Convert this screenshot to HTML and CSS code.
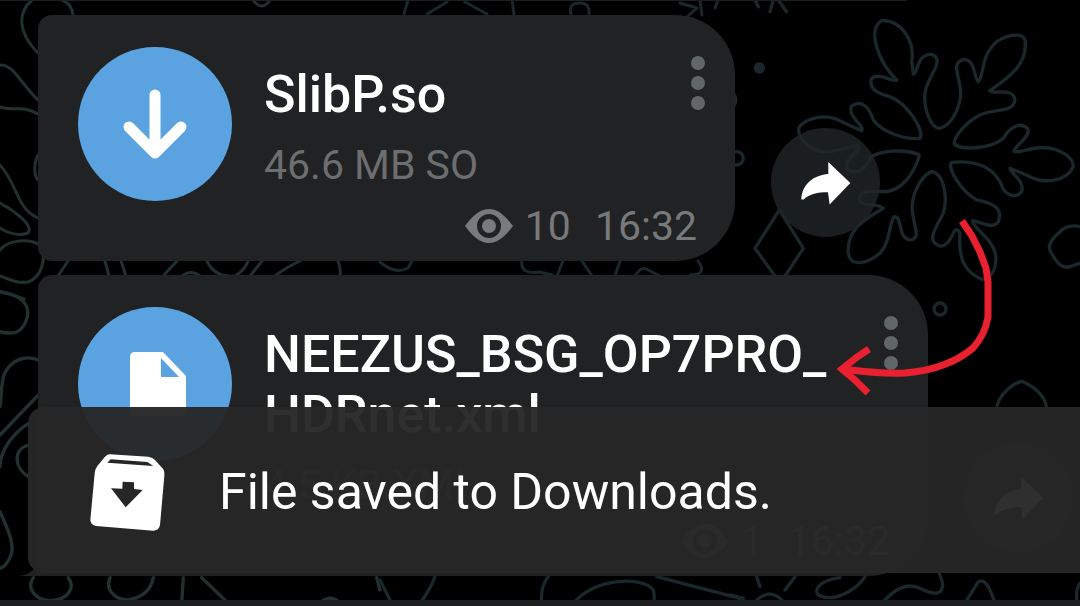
FILE: index.html
```html
<!DOCTYPE html>
<html lang="en">

<head>
    <meta charset="UTF-8">
    <meta name="viewport" content="width=device-width, initial-scale=1.0">
    <title>Chat files</title>
    <link rel="stylesheet" href="styles.css">
</head>

<body>
    <!-- wallpaper -->
    <svg class="wallpaper" width="1080" height="606" viewBox="0 0 1080 606" aria-hidden="true">
        <g class="doodle left">
            <path d="M32 0C18 12 17 32 38 53M62 0Q72 4 73 15M0 65C14 65 18 80 38 100M0 107C12 112 20 104 38 114M0 165C18 185 16 208 38 218M38 155C33 165 34 175 38 180M0 203C10 208 35 225 28 233C20 236 8 234 0 228M0 250C8 240 28 238 40 245C48 260 40 278 28 282C15 284 8 278 0 276M0 292Q12 294 24 299M253 0Q262 12 270 0" />
            <path d="M68 261L58 276M105 261L109 276M121 261L126 276M177 261L163 276M182 276Q191 269 200 276M207 261Q215 278 235 276Q245 270 248 261M262 261L250 276M300 261Q285 268 275 276M338 261Q341 268 340 276" />
        </g>
        <g class="doodle">
            <path d="M380 262Q395 275 408 268L412 261M522 261Q520 275 540 272L552 275M563 261L557 276M582 261L592 276M615 276L620 261M635 276Q642 265 648 270L660 276M698 261Q708 275 690 275M408 0L404 14M427 14L447 2M465 2L487 14M512 0L514 14M571 14Q568 3 580 3Q590 3 589 14M680 3L697 8L688 16M700 1L702 15M718 0L715 8" />
        </g>
        <g class="doodle fine" transform="translate(730 0) scale(.3333)">
            <path d="M500 240C445 185 410 90 455 62C520 60 555 130 545 185L550 222C565 220 560 160 605 163C650 180 590 230 585 280C580 330 605 385 628 385C665 380 700 310 690 260C685 220 665 190 700 178C740 180 730 235 745 245C765 220 750 170 800 125C840 100 880 100 885 120C895 190 840 230 780 272C790 285 850 260 855 300C850 340 790 325 750 345C710 365 670 410 673 432C690 450 780 450 820 415C840 380 870 365 893 385C905 410 850 440 852 455C880 460 920 430 980 450C1020 465 1030 485 1030 500C1010 545 940 555 890 525L840 505C840 520 885 540 875 575C855 600 820 580 815 555C790 500 740 480 665 487C650 500 690 570 740 600C790 610 820 625 805 665C790 690 750 665 728 662C730 690 800 720 798 780C795 820 780 835 755 838C700 815 685 770 690 700C670 660 670 740 630 738C585 725 620 680 640 640C655 590 640 520 605 515C570 530 540 590 548 640C555 690 570 710 545 720C500 720 520 650 493 650C475 670 485 720 450 760C400 800 360 795 355 760C350 690 400 660 460 625C440 605 400 625 388 600C395 560 430 580 480 573C530 560 560 500 568 465C540 450 450 445 420 475C405 510 380 525 355 510C330 480 400 450 385 437C340 440 290 470 245 445C215 425 200 400 208 380C235 350 290 340 335 365L395 392C405 375 350 350 365 318C400 295 420 330 430 360C460 400 530 420 570 415C585 390 530 310 480 290C440 280 415 265 425 235C450 215 490 250 500 240Z" />
            <path d="M135 828L75 745L148 630L220 745L165 828M1050 680Q1010 670 985 700Q945 735 965 760Q990 810 1020 800L1050 790M75 0L85 20M130 0L120 35M145 0L170 35M10 280Q25 300 10 320" />
            <circle cx="20" cy="475" r="20" />
            <circle cx="88" cy="204" r="12" class="dot" />
        </g>
        <g class="doodle fine left" transform="translate(0 280) scale(.3333)">
            <path d="M0 35C60 45 90 70 82 110C70 160 40 165 0 155M115 240C80 225 30 235 10 290C0 340 5 360 0 380M115 345L0 465M85 430C40 460 0 510 0 560M85 495C40 510 40 560 85 590M0 695C30 760 40 790 35 820Q20 860 0 865" />
            <path d="M100 893C80 920 100 960 150 962C210 960 225 920 205 893M330 893C315 930 345 960 385 960C440 950 455 920 460 893M550 893L545 970M605 893L685 970M965 965Q990 945 1015 965M1130 893L1140 930" />
        </g>
        <g class="doodle fine" transform="translate(380 280) scale(.3333)">
            <path d="M0 900L35 970M120 970Q150 930 165 890M485 970Q480 920 505 890M580 970C650 890 790 890 820 930Q825 950 820 970M830 890L1080 955" />
        </g>
        <g class="doodle fine" transform="translate(730 280) scale(.3333)">
            <path d="M800 390C800 345 860 300 880 305C930 330 950 360 950 390M80 890L90 920M165 930L195 890M0 945L40 955M75 965Q120 920 160 965M330 893C270 900 250 930 265 945C310 970 380 930 405 890M460 965Q520 900 570 925Q640 960 638 910L625 870M705 970L745 905Q770 890 795 970M1050 910Q1035 930 1042 970" />
            <circle cx="630" cy="87" r="18" />
        </g>
    </svg>

    <main class="chat">
        <div class="message-edge previous"></div>

        <article class="message">
            <div class="card">
                <div class="file">
                    <button class="round-btn" aria-label="Download SlibP.so">
                        <svg width="64" height="70" viewBox="0 0 64 70">
                            <path d="M32 6V62M6 38L32 64L58 38" fill="none" stroke="#fff" stroke-width="11" stroke-linecap="round" stroke-linejoin="round" />
                        </svg>
                    </button>
                    <div class="info">
                        <h2 class="name">SlibP.so</h2>
                        <p class="size">46.6 MB SO</p>
                    </div>
                    <button class="menu" aria-label="More options"><i></i><i></i><i></i></button>
                </div>
                <div class="meta">
                    <svg class="eye" width="48" height="34" viewBox="0 0 48 34">
                        <path fill-rule="evenodd" d="M0 17C9 5 16 0 24 0S39 5 48 17C39 29 32 34 24 34S9 29 0 17ZM24 5a12 12 0 1 0 0 24a12 12 0 1 0 0-24ZM24 10a7 7 0 1 1 0 14a7 7 0 1 1 0-14Z" />
                    </svg>
                    <span class="views">10</span>
                    <time>16:32</time>
                </div>
            </div>
            <button class="share" aria-label="Forward">
                <svg width="50" height="44" viewBox="210 476 152 132">
                    <path d="M211 592C213 545 250 518 293 515V478L360 542L297 607L292 570C260 570 237 575 218 592Z" />
                </svg>
            </button>
        </article>

        <article class="message">
            <div class="card tail">
                <div class="file">
                    <button class="round-btn" aria-label="Open NEEZUS_BSG_OP7PRO_HDRnet.xml">
                        <svg width="62" height="64" viewBox="-6 0 62 64">
                            <path fill="#fff" fill-rule="evenodd" d="M5 0H33L56 24V59Q56 64 51 64H5Q0 64 0 59V5Q0 0 5 0ZM31 6V25H49Z" />
                        </svg>
                    </button>
                    <div class="info">
                        <h2 class="name">NEEZUS_BSG_OP7PRO_<wbr>HDRnet.xml</h2>
                        <p class="size">4.5 KB XML</p>
                    </div>
                    <button class="menu" aria-label="More options"><i></i><i></i><i></i></button>
                </div>
                <div class="meta">
                    <svg class="eye" width="48" height="34" viewBox="0 0 48 34">
                        <path fill-rule="evenodd" d="M0 17C9 5 16 0 24 0S39 5 48 17C39 29 32 34 24 34S9 29 0 17ZM24 5a12 12 0 1 0 0 24a12 12 0 1 0 0-24ZM24 10a7 7 0 1 1 0 14a7 7 0 1 1 0-14Z" />
                    </svg>
                    <span class="views">1</span>
                    <time>16:32</time>
                </div>
            </div>
            <button class="share" aria-label="Forward">
                <svg width="50" height="44" viewBox="210 476 152 132">
                    <path d="M211 592C213 545 250 518 293 515V478L360 542L297 607L292 570C260 570 237 575 218 592Z" />
                </svg>
            </button>
        </article>

        <div class="message-edge next"></div>
    </main>

    <!-- hand drawn arrow -->
    <svg class="pointer" width="160" height="180" viewBox="835 217 160 180" aria-hidden="true">
        <path d="M962 221L972 236L980 252L986 268L988 282V317Q985 335 973 348Q960 359 943 365Q928 371 905 373Q880 374 842 369" />
        <path d="M869 349L857 357L842 369L855 380L868 393" />
    </svg>

    <div class="toast" role="status">
        <svg width="75" height="80" viewBox="90 36 225 240">
            <path fill="#fff" fill-rule="evenodd" d="M150 43L265 50Q278 52 285 60L310 88Q314 96 313 108L300 255Q297 272 280 272L108 258Q92 255 91 240L104 100Q104 88 112 78L135 50Q142 43 150 43ZM152 58L142 68L280 78L262 66ZM188 125L187 146L153 145L197 202L248 150L222 147V127Z" />
        </svg>
        <p>File saved to Downloads.</p>
    </div>
</body>

</html>
```
FILE: styles.css
```css
* {
    box-sizing: border-box;
    margin: 0;
    padding: 0;
}

body {
    position: relative;
    min-height: 100vh;
    overflow: hidden;
    background: #000;
    color: #fff;
    font-family: Roboto, "Liberation Sans", sans-serif;
}

button {
    border: 0;
    background: none;
    font: inherit;
    cursor: pointer;
}

/* wallpaper */
.wallpaper {
    position: absolute;
    top: 0;
    left: 0;
}

.doodle {
    fill: none;
    stroke: #1a272b;
    stroke-width: 3;
    stroke-linecap: round;
    stroke-linejoin: round;
}

.doodle.left {
    stroke: #22302f;
}

.doodle.fine {
    stroke-width: 10;
}

.dot {
    fill: #1a272b;
}

/* messages */
.chat {
    position: relative;
    display: flex;
    flex-direction: column;
    gap: 14px;
    min-height: 100vh;
}

.message-edge {
    background: #1d1e1f;
}

.previous {
    width: 84%;
    height: 1px;
}

.next {
    flex: 1;
    margin-top: 10px;
}

.message {
    display: flex;
    align-items: flex-end;
    gap: 36px;
    padding-left: 38px;
}

.card {
    position: relative;
    padding: 32px 38px 10px 40px;
    border-radius: 14px 60px 60px 14px;
    background: #202223;
}

.tail {
    border-bottom-left-radius: 0;
}

.tail::before {
    content: '';
    position: absolute;
    right: 100%;
    bottom: 0;
    width: 18px;
    height: 18px;
    background: radial-gradient(circle at 0 0, transparent 17px, #202223 18px);
}

.file {
    display: flex;
    align-items: flex-start;
}

.round-btn {
    display: flex;
    flex: none;
    align-items: center;
    justify-content: center;
    width: 154px;
    height: 154px;
    border-radius: 50%;
    background: #5ba3e0;
}

.info {
    min-width: 459px;
    max-width: 652px;
    padding: 18px 50px 6px 32px;
}

.name {
    font-size: 52px;
    font-weight: 500;
    line-height: 60px;
}

.size {
    margin-top: 15px;
    color: #6d6e70;
    font-size: 41px;
    line-height: 50px;
}

.menu {
    display: flex;
    flex: none;
    flex-direction: column;
    gap: 6px;
    margin: 9px -8px 0 auto;
}

.menu i {
    width: 14px;
    height: 14px;
    border-radius: 50%;
    background: #616667;
}

.meta {
    display: flex;
    align-items: center;
    justify-content: flex-end;
    color: #77797b;
    font-size: 41px;
    line-height: 50px;
}

.eye {
    fill: #777b7f;
}

.views {
    margin: 0 24px 0 12px;
}

.share {
    display: flex;
    flex: none;
    align-items: center;
    justify-content: center;
    width: 109px;
    height: 109px;
    margin-bottom: 24px;
    border-radius: 50%;
    background: rgba(34, 37, 40, .8);
}

.share svg {
    fill: #fff;
}

.pointer {
    position: absolute;
    top: 217px;
    left: 835px;
    fill: none;
    stroke: #e8202f;
    stroke-width: 7;
}

/* toast over the chat */
.toast {
    position: absolute;
    right: 0;
    bottom: 33px;
    left: 28px;
    display: flex;
    align-items: center;
    gap: 54px;
    min-height: 166px;
    padding: 4px 62px 0;
    border-radius: 16px 0 0 16px;
    background: rgba(39, 39, 39, .96);
    font-size: 50px;
    line-height: 60px;
}
```
